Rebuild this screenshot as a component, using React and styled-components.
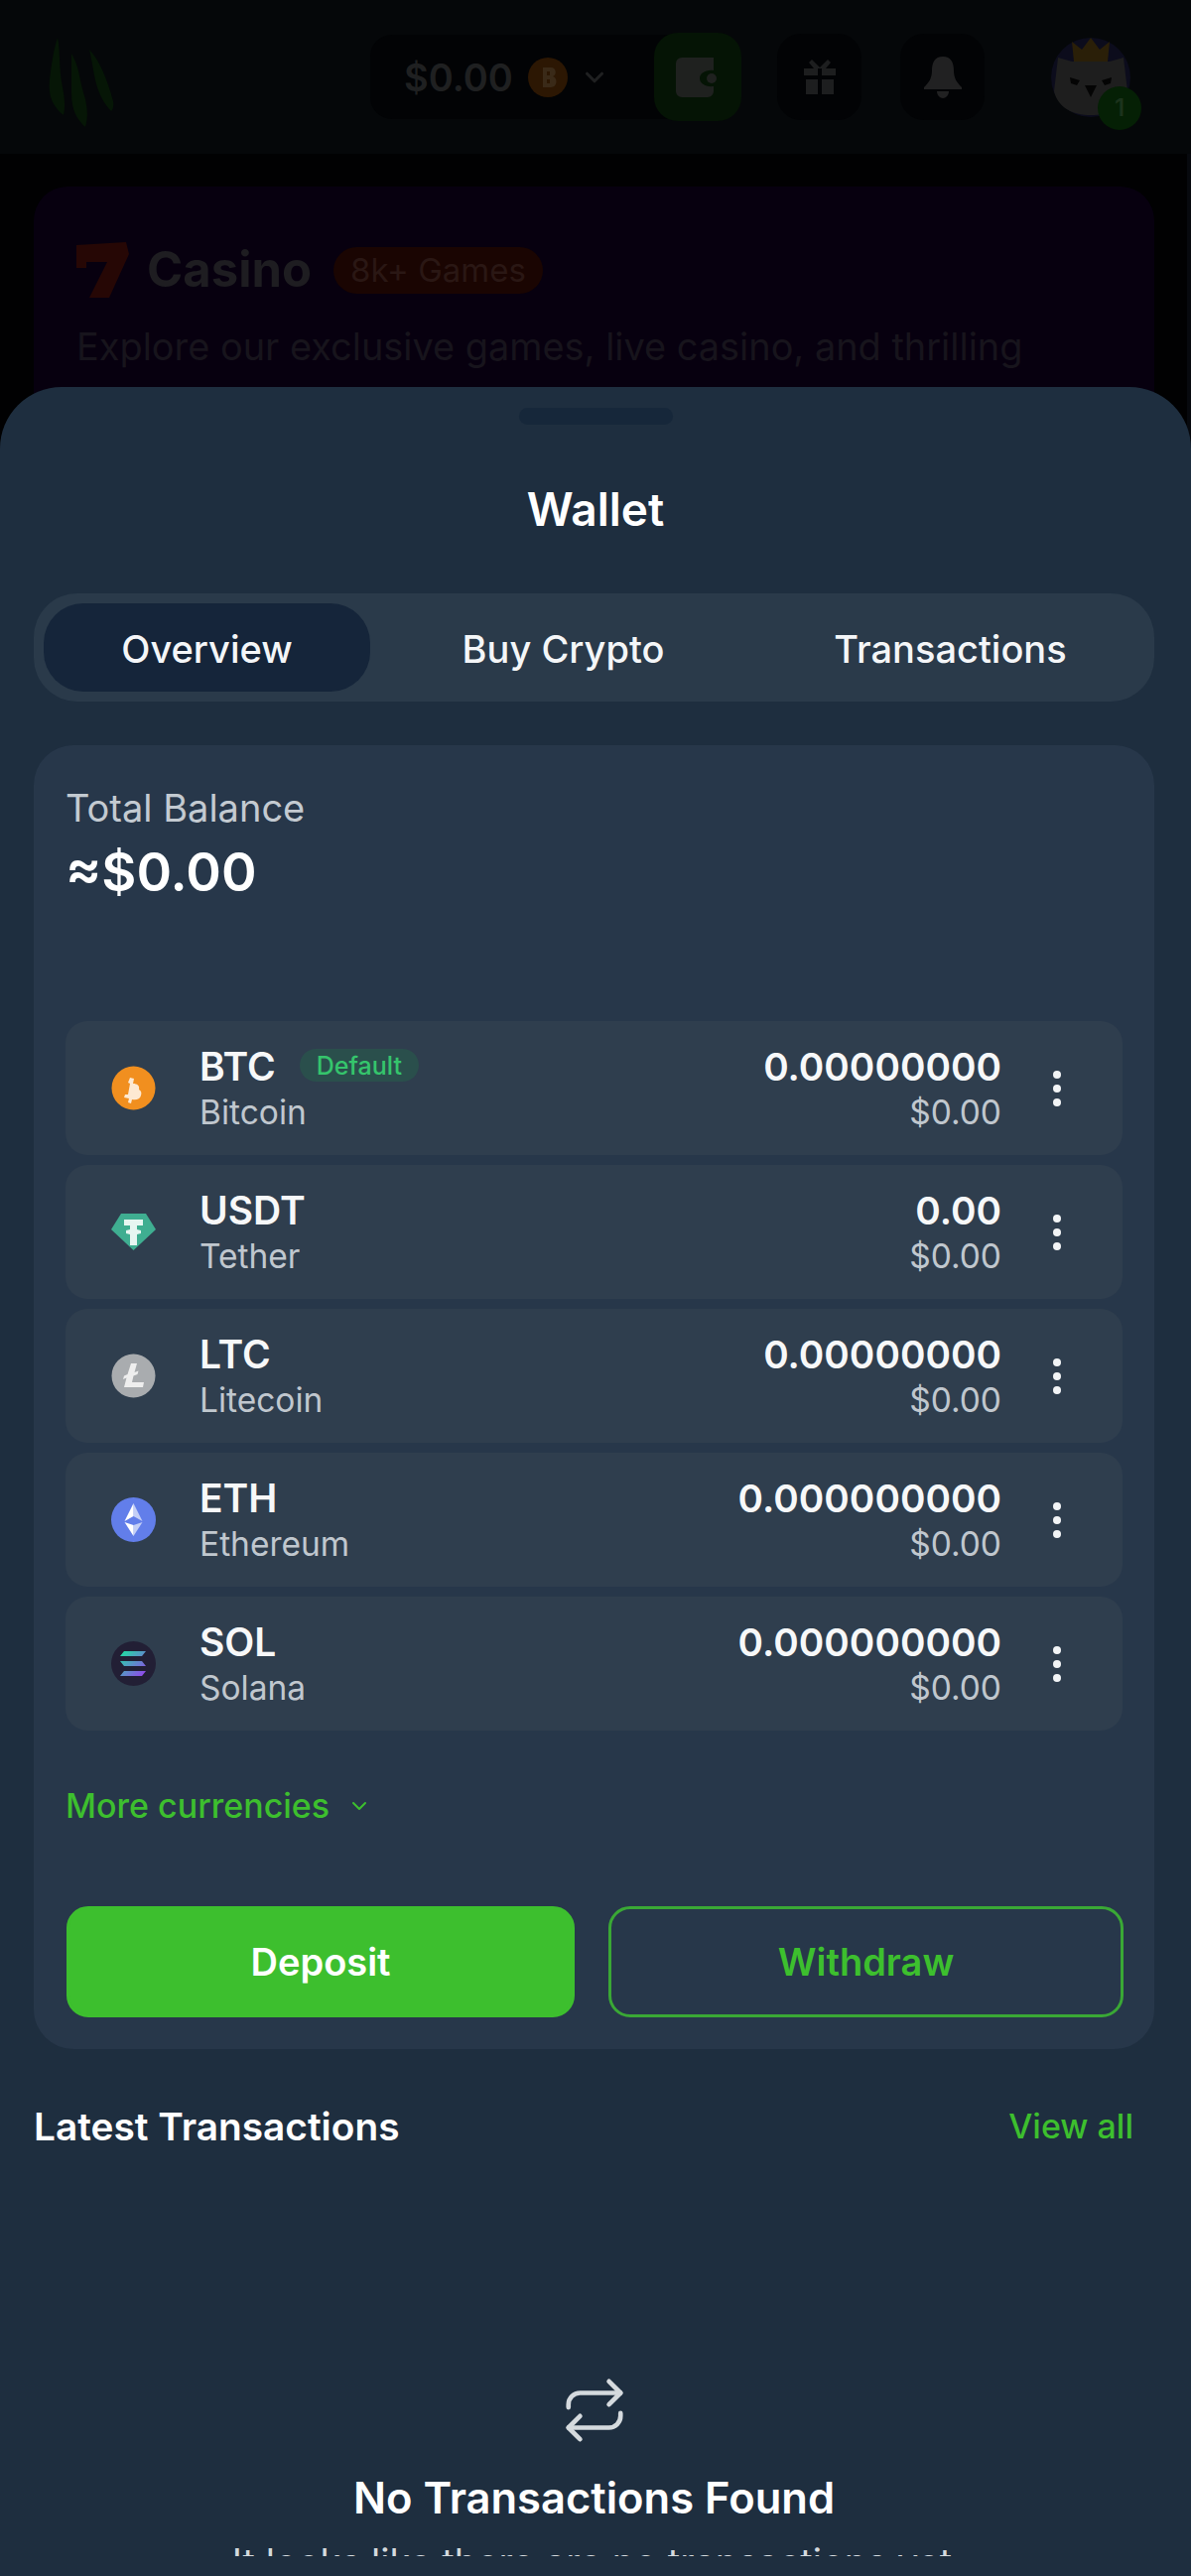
import styled, { createGlobalStyle } from 'styled-components';
import { ChevronDown, Repeat } from 'lucide-react';

const GlobalStyle = createGlobalStyle`
  html, body {
    margin: 0;
    padding: 0;
    background: #010102;
  }
  * {
    box-sizing: border-box;
  }
`;

const Page = styled.div`
  position: relative;
  width: 1200px;
  height: 2596px;
  overflow: hidden;
  background: #010102;
  box-shadow: inset -4px 0 0 #07090e;
  font-family: Inter, 'Noto Sans', sans-serif;
`;

const Header = styled.header`
  display: flex;
  align-items: center;
  height: 155px;
  padding: 0 10px 0 46px;
  background: #050709;
`;

const Logo = styled.svg`
  width: 78px;
  height: 90px;
  margin-right: 249px;
  margin-top: 10px;
`;

const BalanceBox = styled.div`
  display: flex;
  align-items: center;
  width: 300px;
  height: 85px;
  padding-left: 34px;
  border-radius: 22px 0 0 22px;
  background: #020305;
  color: #1f2021;
  font-size: 38px;
  font-weight: 600;
`;

const HeaderCoin = styled.svg`
  width: 40px;
  height: 40px;
  margin: 0 12px 0 15px;
`;

const WalletButton = styled.div`
  display: flex;
  align-items: center;
  justify-content: center;
  width: 88px;
  height: 89px;
  margin-left: -14px;
  border-radius: 24px;
  background: #051405;
`;

const IconButton = styled.div`
  display: flex;
  align-items: center;
  justify-content: center;
  width: 85px;
  height: 87px;
  margin-left: ${(p) => p.$gap}px;
  border-radius: 24px;
  background: #020305;
`;

const Avatar = styled.div`
  position: relative;
  width: 82px;
  height: 84px;
  margin-left: 66px;
`;

const AvatarBadge = styled.span`
  position: absolute;
  right: -10px;
  bottom: -11px;
  display: flex;
  align-items: center;
  justify-content: center;
  width: 44px;
  height: 44px;
  border-radius: 50%;
  background: #052005;
  color: #1c331c;
  font-size: 24px;
  font-weight: 600;
`;

const CasinoCard = styled.section`
  width: 1129px;
  height: 500px;
  margin: 33px 0 0 34px;
  padding: 56px 43px;
  border-radius: 34px;
  background: #07000f;
`;

const CasinoHead = styled.div`
  display: flex;
  align-items: center;
  color: #1e1d21;
  font-size: 49px;
  font-weight: 700;
  line-height: 56px;
`;

const SevenIcon = styled.svg`
  width: 53px;
  height: 56px;
  margin-right: 18px;
`;

const GamesBadge = styled.span`
  display: inline-flex;
  align-items: center;
  height: 47px;
  margin-left: 22px;
  padding: 0 17px;
  border-radius: 24px;
  background: #1a0502;
  color: #2a1714;
  font-size: 33px;
  font-weight: 400;
`;

const CasinoText = styled.p`
  margin: 24px 0 0;
  color: #17141c;
  font-size: 37.900px;
  line-height: 50px;
  white-space: nowrap;
`;

const Sheet = styled.div`
  position: absolute;
  top: 390px;
  left: 0;
  right: 0;
  bottom: 0;
  display: flex;
  flex-direction: column;
  padding-bottom: 20px;
  border-radius: 62px 62px 0 0;
  background: #1e2e3f;
`;

const Handle = styled.div`
  flex: none;
  width: 155px;
  height: 17px;
  margin: 21px auto 0;
  border-radius: 9px;
  background: #16273a;
`;

const Title = styled.h2`
  flex: none;
  margin: 60px 0 0;
  color: #fff;
  font-size: 46px;
  font-weight: 600;
  line-height: 50px;
  text-align: center;
`;

const Scroll = styled.div`
  flex: 1;
  min-height: 0;
  overflow: hidden;
  padding: 60px 37px 0 34px;
`;

const Tabs = styled.div`
  display: grid;
  grid-template-columns: 329px 389px 1fr;
  height: 109px;
  padding: 10px;
  border-radius: 44px;
  background: #2a3a4a;
`;

const Tab = styled.div`
  display: flex;
  align-items: center;
  justify-content: center;
  padding-top: 2px;
  border-radius: 40px;
  background: ${(p) => (p.$active ? '#15253a' : 'transparent')};
  color: #f4f6f8;
  font-size: 38px;
  font-weight: 500;
`;

const Card = styled.section`
  margin-top: 44px;
  padding: 38px 32px 32px;
  border-radius: 40px;
  background: #27374a;
`;

const BalanceLabel = styled.div`
  color: #c3cad1;
  font-size: 38px;
  line-height: 50px;
`;

const BalanceValue = styled.div`
  margin-top: 10px;
  color: #fff;
  font-size: 54px;
  font-weight: 600;
  line-height: 60px;
`;

const Rows = styled.div`
  display: flex;
  flex-direction: column;
  gap: 10px;
  margin-top: 120px;
`;

const Row = styled.div`
  display: flex;
  align-items: center;
  height: 135px;
  padding: 3px 0 0 46px;
  border-radius: 22px;
  background: #2f3e4e;
`;

const CoinIcon = styled.svg`
  flex: none;
  width: 45px;
  height: 45px;
  margin: -3px 44px 0 0;
`;

const Names = styled.div`
  flex: 1;
  min-width: 0;
`;

const Symbol = styled.div`
  display: flex;
  align-items: center;
  color: #f7f8f9;
  font-size: 39px;
  font-weight: 600;
  line-height: 46px;
`;

const DefaultTag = styled.span`
  display: inline-flex;
  align-items: center;
  height: 33px;
  margin: -3px 0 0 24px;
  padding: 0 17px;
  border-radius: 17px;
  background: #2a4f4c;
  color: #35c56c;
  font-size: 25px;
  font-weight: 500;
`;

const SubText = styled.div`
  color: #c0c7ce;
  font-size: 33.500px;
  line-height: 46px;
`;

const Amounts = styled.div`
  text-align: right;
`;

const Amount = styled.div`
  color: #f7f8f9;
  font-size: 38.700px;
  font-weight: 600;
  line-height: 46px;
`;

const MoreIcon = styled.svg`
  flex: none;
  width: 12px;
  height: 44px;
  margin: -3px 60px 0 50px;
`;

const MoreLink = styled.div`
  display: flex;
  align-items: center;
  gap: 18px;
  margin-top: 54px;
  color: #3dbf2e;
  font-size: 34px;
  font-weight: 500;
  line-height: 44px;
`;

const Actions = styled.div`
  display: grid;
  grid-template-columns: 512px 519px;
  gap: 34px;
  margin: 79px 0 0 1px;
`;

const ActionButton = styled.button`
  height: 112px;
  border: 3px solid ${(p) => (p.$filled ? '#3dbf2e' : '#3aa835')};
  border-radius: 22px;
  background: ${(p) => (p.$filled ? '#3dbf2e' : 'transparent')};
  color: ${(p) => (p.$filled ? '#fff' : '#3dbf2e')};
  font-family: inherit;
  font-size: 38px;
  font-weight: 600;
`;

const LatestHead = styled.div`
  display: flex;
  align-items: center;
  justify-content: space-between;
  margin-top: 53px;
  padding-right: 21px;
  color: #fff;
  font-size: 38.800px;
  font-weight: 600;
  line-height: 50px;
`;

const ViewAll = styled.span`
  color: #3dbf2e;
  font-size: 34px;
  font-weight: 500;
`;

const Empty = styled.div`
  display: flex;
  flex-direction: column;
  align-items: center;
  margin-top: 226px;
  color: #fff;
`;

const EmptyTitle = styled.div`
  margin-top: 25px;
  font-size: 43.500px;
  font-weight: 600;
  line-height: 56px;
`;

const EmptyText = styled.div`
  margin: 16px 4px 0 0;
  color: #d4d9dd;
  font-size: 38px;
  line-height: 42px;
  white-space: nowrap;
`;

const BitcoinIcon = () => (
  <CoinIcon viewBox="0 0 45 45">
    <circle cx="22.5" cy="22.5" r="22" fill="#f18f1f" />
    <path
      d="M19 12l4 1-1 5c4 0 7 2 6 6 2 1 3 3 2 6-1 4-5 5-9 4l-1 4-3-1 1-4-5-1 1-3h3l2-11-2-1z"
      fill="#fde9d2"
      fillRule="evenodd"
    />
  </CoinIcon>
);

const TetherIcon = () => (
  <CoinIcon viewBox="0 0 45 45">
    <path d="M10 4h25l10 16-22.500 21L0 20z" fill="#3fae91" />
    <path d="M13 10h19v6h-6v4l4 1v3l-4 1v11h-7V25l-4-1v-3l4-1v-4h-6z" fill="#e6f6f1" />
  </CoinIcon>
);

const LitecoinIcon = () => (
  <CoinIcon viewBox="0 0 45 45">
    <circle cx="22.5" cy="22.5" r="22" fill="#a9acaf" />
    <path d="M20 10h6l-2.500 9 4-1.500-1 3.500-4 1.500L21 29h12l-1 5H13l2.500-9.500-3.500 1.500 1-3.500 3.500-1.500z" fill="#eeeeee" />
  </CoinIcon>
);

const EthereumIcon = () => (
  <CoinIcon viewBox="0 0 45 45">
    <circle cx="22.5" cy="22.5" r="22.5" fill="#627eea" />
    <path d="M22.500 6v13l9 5z" fill="#c4cff6" />
    <path d="M22.500 6l-9 18 9-5z" fill="#fff" />
    <path d="M22.500 28v11l9-14z" fill="#c4cff6" />
    <path d="M22.500 28v11l-9-14z" fill="#fff" />
  </CoinIcon>
);

const SolanaIcon = () => (
  <CoinIcon viewBox="0 0 45 45">
    <defs>
      <linearGradient id="sol" x1="0" y1="0" x2="1" y2="1">
        <stop offset="0" stopColor="#19e6a0" />
        <stop offset="1" stopColor="#9a3df0" />
      </linearGradient>
    </defs>
    <circle cx="22.5" cy="22.5" r="22.5" fill="#221f35" />
    <path
      d="M13 10h22l-4 5H9zM9 20h22l4 5H13zM13 30h22l-4 5H9z"
      fill="url(#sol)"
    />
  </CoinIcon>
);

const coins = [
  { symbol: 'BTC', name: 'Bitcoin', amount: '0.00000000', Icon: BitcoinIcon, isDefault: true },
  { symbol: 'USDT', name: 'Tether', amount: '0.00', Icon: TetherIcon },
  { symbol: 'LTC', name: 'Litecoin', amount: '0.00000000', Icon: LitecoinIcon },
  { symbol: 'ETH', name: 'Ethereum', amount: '0.000000000', Icon: EthereumIcon },
  { symbol: 'SOL', name: 'Solana', amount: '0.000000000', Icon: SolanaIcon },
];

const App = () => {
  return (
    <Page>
      <GlobalStyle />
      <Header>
        <Logo viewBox="0 0 78 90">
          <path d="M12 0c3 14 1 30 5 50 2 10 3 20 1 28C8 70 2 60 4 42 6 26 8 12 12 0z" fill="#061606" />
          <path d="M26 16c8 12 8 28 14 46 2 10 3 18 0 28-9-8-14-18-14-34 0-14 0-28 0-40z" fill="#061606" />
          <path d="M44 12c10 10 18 30 24 52 1 4 0 8-2 10-8-8-14-20-17-36-2-10-3-18-5-26z" fill="#061606" />
        </Logo>
        <BalanceBox>
          $0.00
          <HeaderCoin viewBox="0 0 40 40">
            <circle cx="20" cy="20" r="20" fill="#2c1703" />
            <path d="M15 10h8c6 0 6 8 2 9 5 1 5 11-2 11h-8zM19 14v4h3v-4zM19 22v4h3v-4z" fill="#3a2a18" fillRule="evenodd" />
          </HeaderCoin>
          <ChevronDown size={30} color="#1f2021" strokeWidth={2.5} />
        </BalanceBox>
        <WalletButton>
          <svg width="44" height="40" viewBox="0 0 44 40">
            <path d="M6 0h32v13c-8-1-14 3-14 8s6 9 14 8v5a6 6 0 0 1-6 6H6a6 6 0 0 1-6-6V6a6 6 0 0 1 6-6z" fill="#1f211f" />
            <circle cx="36" cy="21" r="5" fill="#1f211f" />
          </svg>
        </WalletButton>
        <IconButton $gap={36}>
          <svg width="36" height="36" viewBox="0 0 36 36" fill="#1d1e1f">
            <path d="M2 9h14v7H2zM20 9h14v7H20zM4 20h12v15H4zM20 20h12v15H20z" />
            <path d="M10 0l8 8 8-8 3 3-5 6H12L7 3z" />
          </svg>
        </IconButton>
        <IconButton $gap={39}>
          <svg width="38" height="42" viewBox="0 0 38 42" fill="#212122">
            <path d="M19 0c8 0 11 6 11 14 0 8 3 12 8 17v2H0v-2c5-5 8-9 8-17C8 6 11 0 19 0z" />
            <path d="M13 35h12c0 4-3 7-6 7s-6-3-6-7z" />
          </svg>
        </IconButton>
        <Avatar>
          <svg width="82" height="84" viewBox="0 0 82 84">
            <circle cx="41" cy="42" r="40" fill="#0c0c1c" />
            <path d="M8 22l14 4h38l14-4 4 34c-4 16-18 24-37 24S8 72 4 56z" fill="#1e1e1e" />
            <path d="M24 26l-2-20 10 8 9-12 9 12 10-8-2 20z" fill="#2a1f08" />
            <path d="M20 42l10 3-3 5-6-2zM62 42l-10 3 3 5 6-2z" fill="#040404" />
            <path d="M35 50h12l-6 12z" fill="#040404" />
          </svg>
          <AvatarBadge>1</AvatarBadge>
        </Avatar>
      </Header>

      <CasinoCard>
        <CasinoHead>
          <SevenIcon viewBox="0 0 53 56">
            <path d="M0 3l50-3 3 12-20 44H13l18-36H10v6H0z" fill="#260705" />
          </SevenIcon>
          Casino
          <GamesBadge>8k+ Games</GamesBadge>
        </CasinoHead>
        <CasinoText>Explore our exclusive games, live casino, and thrilling</CasinoText>
      </CasinoCard>

      <Sheet>
        <Handle />
        <Title>Wallet</Title>
        <Scroll>
          <Tabs>
            <Tab $active>Overview</Tab>
            <Tab>Buy Crypto</Tab>
            <Tab>Transactions</Tab>
          </Tabs>

          <Card>
            <BalanceLabel>Total Balance</BalanceLabel>
            <BalanceValue>≈$0.00</BalanceValue>
            <Rows>
              {coins.map(({ symbol, name, amount, Icon, isDefault }) => (
                <Row key={symbol}>
                  <Icon />
                  <Names>
                    <Symbol>
                      {symbol}
                      {isDefault && <DefaultTag>Default</DefaultTag>}
                    </Symbol>
                    <SubText>{name}</SubText>
                  </Names>
                  <Amounts>
                    <Amount>{amount}</Amount>
                    <SubText>$0.00</SubText>
                  </Amounts>
                  <MoreIcon viewBox="0 0 12 44" fill="#f2f4f6">
                    <circle cx="6" cy="8" r="4" />
                    <circle cx="6" cy="22" r="4" />
                    <circle cx="6" cy="36" r="4" />
                  </MoreIcon>
                </Row>
              ))}
            </Rows>
            <MoreLink>
              More currencies
              <ChevronDown size={24} strokeWidth={2} />
            </MoreLink>
            <Actions>
              <ActionButton $filled>Deposit</ActionButton>
              <ActionButton>Withdraw</ActionButton>
            </Actions>
          </Card>

          <LatestHead>
            Latest Transactions
            <ViewAll>View all</ViewAll>
          </LatestHead>

          <Empty>
            <Repeat size={70} strokeWidth={1.6} color="#d5dade" />
            <EmptyTitle>No Transactions Found</EmptyTitle>
            <EmptyText>It looks like there are no transactions yet</EmptyText>
          </Empty>
        </Scroll>
      </Sheet>
    </Page>
  );
};

export default App;
